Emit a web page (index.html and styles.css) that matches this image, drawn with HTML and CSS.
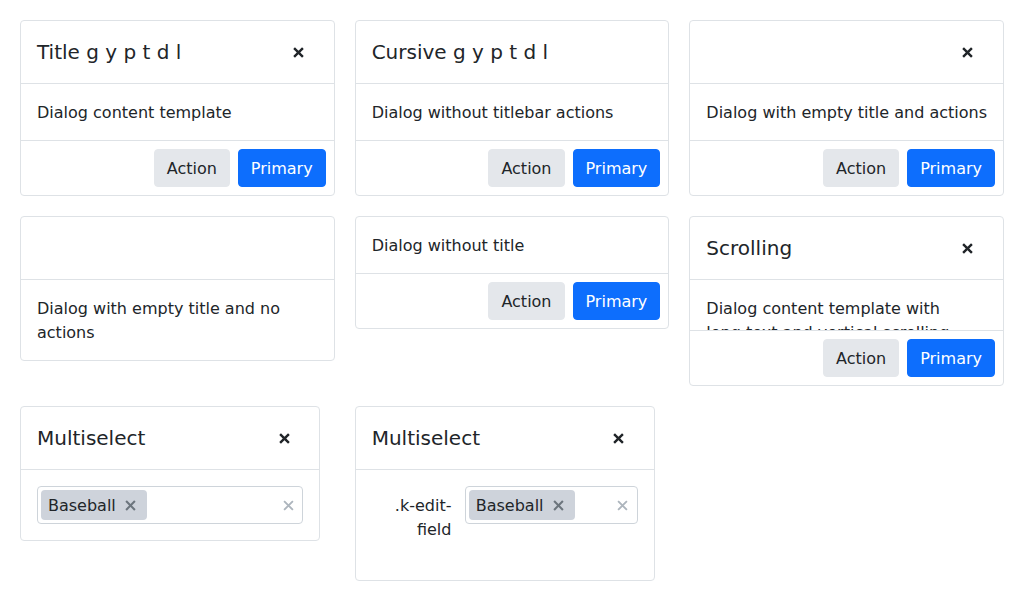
FILE: index.html
```html
<!DOCTYPE html>
<html>
<head>
<meta charset="utf-8">
<link rel="stylesheet" href="styles.css">
</head>
<body>
<div class="grid">
  <div class="dialog">
    <div class="titlebar">
      <div class="title">Title g y p t d l</div>
      <button class="close"><svg viewBox="0 0 10 10" width="11" height="11"><path d="M1 1L9 9M9 1L1 9"/></svg></button>
    </div>
    <div class="content">Dialog content template</div>
    <div class="actions"><button class="btn">Action</button><button class="btn primary">Primary</button></div>
  </div>

  <div class="dialog">
    <div class="titlebar">
      <div class="title">Cursive g y p t d l</div>
    </div>
    <div class="content">Dialog without titlebar actions</div>
    <div class="actions"><button class="btn">Action</button><button class="btn primary">Primary</button></div>
  </div>

  <div class="dialog">
    <div class="titlebar">
      <div class="title"></div>
      <button class="close"><svg viewBox="0 0 10 10" width="11" height="11"><path d="M1 1L9 9M9 1L1 9"/></svg></button>
    </div>
    <div class="content">Dialog with empty title and actions</div>
    <div class="actions"><button class="btn">Action</button><button class="btn primary">Primary</button></div>
  </div>

  <div class="dialog">
    <div class="titlebar">
      <div class="title"></div>
    </div>
    <div class="content">Dialog with empty title and no actions</div>
  </div>

  <div class="dialog">
    <div class="content">Dialog without title</div>
    <div class="actions"><button class="btn">Action</button><button class="btn primary">Primary</button></div>
  </div>

  <div class="dialog">
    <div class="titlebar">
      <div class="title">Scrolling</div>
      <button class="close"><svg viewBox="0 0 10 10" width="11" height="11"><path d="M1 1L9 9M9 1L1 9"/></svg></button>
    </div>
    <div class="content scroll">Dialog content template with long text and vertical scrolling</div>
    <div class="actions"><button class="btn">Action</button><button class="btn primary">Primary</button></div>
  </div>

  <div class="dialog narrow">
    <div class="titlebar">
      <div class="title">Multiselect</div>
      <button class="close"><svg viewBox="0 0 10 10" width="11" height="11"><path d="M1 1L9 9M9 1L1 9"/></svg></button>
    </div>
    <div class="content form">
      <div class="multiselect">
        <span class="chip"><span class="chip-text">Baseball</span><span class="chip-x"><svg viewBox="0 0 10 10" width="11" height="11"><path d="M1 1L9 9M9 1L1 9"/></svg></span></span>
        <span class="spacer"></span>
        <span class="clear"><svg viewBox="0 0 10 10" width="11" height="11"><path d="M1 1L9 9M9 1L1 9"/></svg></span>
      </div>
    </div>
  </div>

  <div class="dialog narrow">
    <div class="titlebar">
      <div class="title">Multiselect</div>
      <button class="close"><svg viewBox="0 0 10 10" width="11" height="11"><path d="M1 1L9 9M9 1L1 9"/></svg></button>
    </div>
    <div class="content form">
      <div class="edit-form">
        <div class="edit-label">.k-edit-field</div>
        <div class="edit-field">
          <div class="multiselect">
            <span class="chip"><span class="chip-text">Baseball</span><span class="chip-x"><svg viewBox="0 0 10 10" width="11" height="11"><path d="M1 1L9 9M9 1L1 9"/></svg></span></span>
            <span class="spacer"></span>
            <span class="clear"><svg viewBox="0 0 10 10" width="11" height="11"><path d="M1 1L9 9M9 1L1 9"/></svg></span>
          </div>
        </div>
      </div>
    </div>
  </div>
</div>
</body>
</html>
```

FILE: styles.css
```css
* { box-sizing: border-box; }
body {
  margin: 0;
  background: #ffffff;
  font-family: "DejaVu Sans", sans-serif;
  color: #212529;
  font-size: 16px;
  line-height: 24px;
}
.grid {
  display: grid;
  grid-template-columns: repeat(3, 1fr);
  gap: 20px;
  align-items: start;
  padding: 20px;
}
.dialog {
  border: 1px solid #dee2e6;
  border-radius: 4px;
  background: #fff;
  overflow: hidden;
}
.dialog.narrow { width: 300px; }
.titlebar {
  display: flex;
  align-items: center;
  padding: 16px 16px;
  border-bottom: 1px solid #dee2e6;
}
.title {
  flex: 1;
  font-size: 20px;
  line-height: 30px;
  min-height: 30px;
  white-space: nowrap;
}
.close {
  width: 30px;
  height: 30px;
  margin-right: 4px;
  padding: 0;
  border: none;
  background: transparent;
  display: flex;
  align-items: center;
  justify-content: center;
}
.close svg path {
  stroke: #212529;
  stroke-width: 2.2;
  fill: none;
}
.content {
  padding: 17px 16px 15px;
}
.content.form {
  padding: 16px;
}
.content.scroll {
  height: 50px;
  padding-right: 32px;
  overflow: hidden;
}
.actions {
  display: flex;
  justify-content: flex-end;
  gap: 8px;
  padding: 8px;
  border-top: 1px solid #dee2e6;
}
.btn {
  font-family: "DejaVu Sans", sans-serif;
  font-size: 16px;
  line-height: 24px;
  padding: 7px 12px 5px;
  border: 1px solid #e4e7eb;
  background: #e4e7eb;
  color: #212529;
  border-radius: 4px;
}
.btn.primary {
  background: #0d6efd;
  border-color: #0d6efd;
  color: #fff;
}
.multiselect {
  display: flex;
  align-items: center;
  height: 38px;
  padding: 3px;
  border: 1px solid #ced4da;
  border-radius: 4px;
}
.chip {
  display: flex;
  align-items: center;
  height: 30px;
  padding: 1px 8px 0 7px;
  gap: 7px;
  background: #ced3db;
  border-radius: 4px;
}
.chip-x, .clear {
  width: 16px;
  height: 16px;
  display: flex;
  align-items: center;
  justify-content: center;
}
.chip-x svg path {
  stroke: #6c757d;
  stroke-width: 1.9;
  fill: none;
}
.spacer { flex: 1; }
.clear { margin-right: 3px; }
.clear svg path {
  stroke: #adb5bd;
  stroke-width: 1.7;
  fill: none;
}
.edit-form {
  display: grid;
  grid-template-columns: 30% 65%;
  column-gap: 5%;
}
.edit-label {
  text-align: right;
  padding: 8px 0 6px;
  margin-bottom: 16px;
}
```
